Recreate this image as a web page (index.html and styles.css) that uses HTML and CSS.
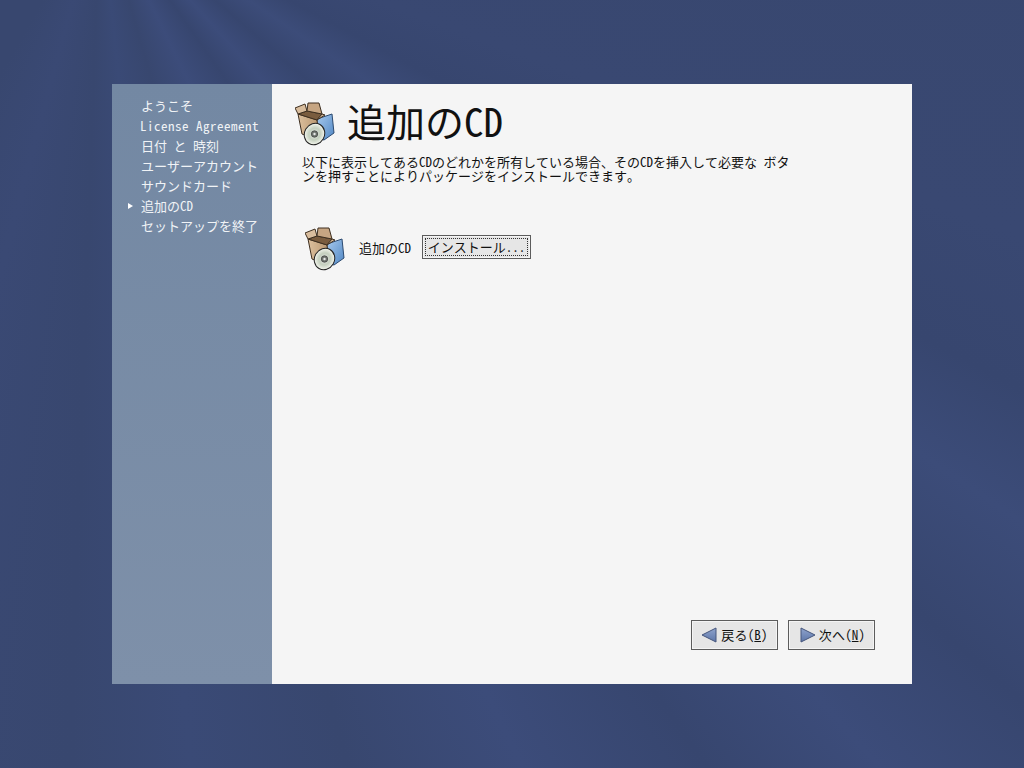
FILE: index.html
```html
<!DOCTYPE html>
<html lang="ja">
<head>
<meta charset="utf-8">
<title>追加のCD</title>
<link rel="stylesheet" href="styles.css">
</head>
<body>
<svg class="defs" width="0" height="0" aria-hidden="true">
  <defs>
    <linearGradient id="folder" x1="0" y1="0" x2="1" y2="1"><stop offset="0" stop-color="#a9cbee"/><stop offset="1" stop-color="#4f86c4"/></linearGradient>
    <linearGradient id="box" x1="0" y1="0" x2="1" y2="0"><stop offset="0" stop-color="#dcc09e"/><stop offset="1" stop-color="#b8966f"/></linearGradient>
    <linearGradient id="arrow" x1="0" y1="0" x2="0" y2="1"><stop offset="0" stop-color="#8fa3cc"/><stop offset="1" stop-color="#5d76a8"/></linearGradient>
    <radialGradient id="disc"><stop offset="0" stop-color="#e8e8e8"/><stop offset=".55" stop-color="#c4cfbe"/><stop offset="1" stop-color="#f4f6ee"/></radialGradient>
    <symbol id="cdbox" viewBox="0 0 40 44">
      <path d="M22 17 L37 12 L39 31 L29 38 L22 36 Z" fill="url(#folder)" stroke="#2c4a70" stroke-width="1"/>
      <path d="M3 12 L22 18 L24 39 L7 32 Z" fill="url(#box)" stroke="#3e2f20" stroke-width="1"/>
      <path d="M3 12 L12 9 L27 12 L22 18 Z" fill="#7a5c3e" stroke="#3e2f20" stroke-width="1"/>
      <path d="M3 12 L0 6 L10 2 L12 9 Z" fill="#d9bd9d" stroke="#3e2f20" stroke-width="1"/>
      <path d="M12 9 L13 1 L24 1 L27 12 Z" fill="#c6a582" stroke="#3e2f20" stroke-width="1"/>
      <path d="M22 18 L30 13 L27 12 Z" fill="#d9bd9d" stroke="#3e2f20" stroke-width="1"/>
      <ellipse cx="19.5" cy="32" rx="10" ry="11" transform="rotate(30 19.5 32)" fill="url(#disc)" stroke="#222" stroke-width="1"/>
      <circle cx="19.5" cy="32" r="3.2" fill="#6f756f" stroke="#444" stroke-width=".8"/>
      <circle cx="19.5" cy="32" r="1.2" fill="#e8e8e8"/>
    </symbol>
  </defs>
</svg>
<div class="wizard">
  <nav class="sidebar">
    <ul class="steps">
      <li class="step">ようこそ</li>
      <li class="step latin">License Agreement</li>
      <li class="step">日付 と 時刻</li>
      <li class="step">ユーザーアカウント</li>
      <li class="step">サウンドカード</li>
      <li class="step current">追加のCD</li>
      <li class="step">セットアップを終了</li>
    </ul>
  </nav>
  <main class="content">
    <header class="title-row">
      <svg class="icon-large"><use href="#cdbox"/></svg>
      <h1 class="title">追加のCD</h1>
    </header>
    <p class="intro">以下に表示してあるCDのどれかを所有している場合、そのCDを挿入して必要な ボタ<br>ンを押すことによりパッケージをインストールできます。</p>
    <div class="cd-row">
      <svg class="icon-large"><use href="#cdbox"/></svg>
      <span class="cd-label">追加のCD</span>
      <button class="btn install" type="button"><span class="focus">インストール...</span></button>
    </div>
    <footer class="actions">
      <button class="btn nav back" type="button">
        <svg class="arrow" viewBox="0 0 16 16"><path d="M15 1 V15 L1 8 Z"/></svg>
        <span class="nav-text">戻る(<u>B</u>)</span>
      </button>
      <button class="btn nav next" type="button">
        <svg class="arrow" viewBox="0 0 16 16"><path d="M1 1 V15 L15 8 Z"/></svg>
        <span class="nav-text">次へ(<u>N</u>)</span>
      </button>
    </footer>
  </main>
</div>
</body>
</html>
```
FILE: styles.css
```css
* { box-sizing: border-box; }
html, body { height: 100%; }
body {
  margin: 0;
  padding: 84px 112px;
  background: conic-gradient(from 90deg at 100px -100px,
    #38476f 0deg, #394872 20deg, #37466f 28deg, #3c4c79 34deg, #37466f 41deg,
    #3c4c7a 48deg, #37466f 55deg, #3c4c7a 64deg, #38476f 74deg, #3a4a76 84deg,
    #38476f 92deg, #3a4974 105deg, #38476f 120deg);
  font-family: "Noto Sans Mono CJK JP", "Noto Sans CJK JP", "DejaVu Sans Mono", monospace;
  font-size: 13px;
  color: #111;
}
.defs { position: absolute; }
.wizard { display: flex; width: 800px; height: 600px; }
.sidebar {
  width: 160px;
  padding: 12px 0 0 28px;
  background: linear-gradient(180deg, #7388a3 0%, #7e90a9 100%);
}
.steps { margin: 0; padding: 0; list-style: none; }
.step {
  position: relative;
  height: 20px;
  line-height: 20px;
  padding-left: 1px;
  color: #f0f3f6;
  white-space: nowrap;
}
.latin { letter-spacing: .5px; padding-left: 0; }
.current::before {
  content: "";
  position: absolute;
  left: -12px;
  top: 7px;
  border-left: 5px solid #fff;
  border-top: 3px solid transparent;
  border-bottom: 3px solid transparent;
}
.content {
  flex: 1;
  display: flex;
  flex-direction: column;
  padding: 18px 37px 34px 23px;
  background: #f5f5f5;
}
.title-row { display: flex; align-items: center; gap: 12px; height: 44px; }
.icon-large { flex: none; width: 40px; height: 44px; }
.title { margin: -8px 0 0; font-size: 39px; font-weight: 400; line-height: 44px; }
.intro { margin: 9px 0 0 7px; width: 500px; line-height: 14px; white-space: nowrap; }
.cd-row { display: flex; align-items: center; margin: 44px 0 0 10px; height: 44px; }
.cd-label { margin: -4px 0 0 14px; }
.btn {
  padding: 0;
  border: 1px solid #5c5c5c;
  background: #e6e6e6;
  box-shadow: inset 0 0 0 1px #f4f4f4;
  font: inherit;
  color: #111;
}
.install { margin: -4px 0 0 11px; width: 109px; height: 24px; padding: 2px; }
.focus {
  display: block;
  height: 100%;
  line-height: 16px;
  border: 1px dotted #333;
  white-space: nowrap;
}
.actions { margin-top: auto; display: flex; justify-content: flex-end; gap: 10px; }
.nav {
  display: flex;
  align-items: center;
  justify-content: center;
  width: 87px;
  height: 30px;
}
.back { gap: 4px; }
.next { gap: 3px; padding-left: 2px; }
.nav-text { margin-top: -2px; letter-spacing: .2px; }
.arrow { width: 16px; height: 16px; fill: url(#arrow); stroke: #46567c; stroke-width: 1; }
```
